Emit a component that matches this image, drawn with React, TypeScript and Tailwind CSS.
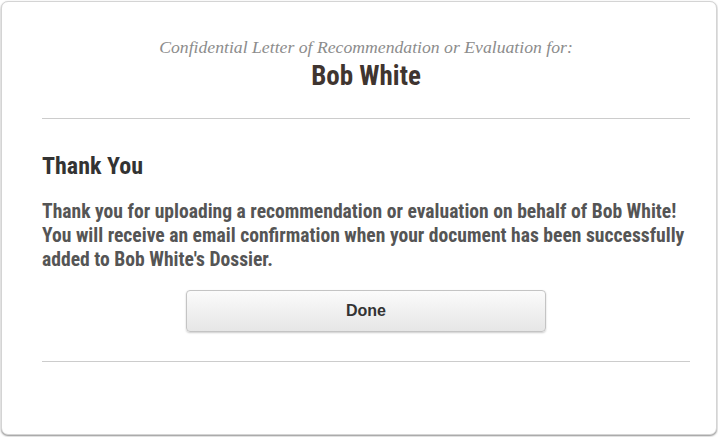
export default function App() {
  return (
    <div className="w-[718px] h-[437px] bg-white p-px">
      <div className="w-[716px] h-[434px] rounded-[7px] border border-[#d4d4d4] bg-white shadow-[0_1px_2px_rgba(0,0,0,0.45)]">
        <div className="ml-10 w-[648px] font-['Roboto',sans-serif] font-stretch-condensed">
          <div className="pt-[34px] text-center">
            <p className="font-['Liberation_Serif',serif] text-[17.7px] italic leading-[22px] text-[#8c8c8c] font-stretch-normal">
              Confidential Letter of Recommendation or Evaluation for:
            </p>
            <h1 className="mt-[2px] text-[27px] font-bold leading-[32px] text-[#3f3530]">
              Bob White
            </h1>
          </div>
          <hr className="mt-[26px] border-t border-[#cccccc]" />
          <h2 className="mt-[33px] text-[24px] font-bold leading-[28px] text-[#333333]">
            Thank You
          </h2>
          <p className="mt-[20px] text-[19.6px] font-bold leading-[24px] text-[#555555]">
            Thank you for uploading a recommendation or evaluation on behalf of Bob White!
            <br />
            You will receive an email confirmation when your document has been successfully
            <br />
            added to Bob White's Dossier.
          </p>
          <div className="mt-[18px] flex justify-center">
            <button className="h-[42px] w-[360px] rounded-[4px] border border-[#c4c4c4] bg-gradient-to-b from-[#fbfbfb] to-[#e6e6e6] font-['Liberation_Sans',Arial,sans-serif] text-[16px] font-bold text-[#333333] shadow-[0_1px_2px_rgba(0,0,0,0.2)] font-stretch-normal">
              Done
            </button>
          </div>
          <hr className="mt-[29px] border-t border-[#cccccc]" />
        </div>
      </div>
    </div>
  )
}
